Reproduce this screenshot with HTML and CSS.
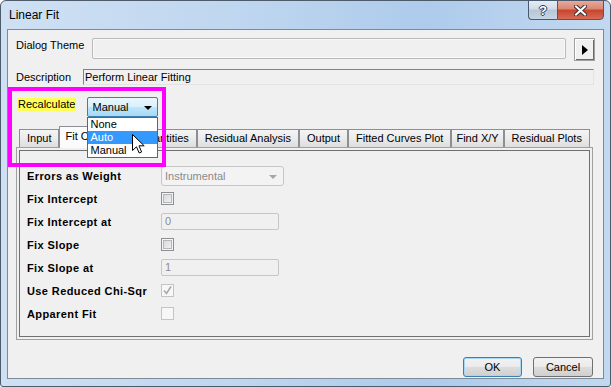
FILE: index.html
```html
<!DOCTYPE html>
<html lang="en">
<head>
  <meta charset="UTF-8" />
  <title>Linear Fit</title>
  <link rel="stylesheet" href="styles.css">
</head>
<body>
  <div class="window">
    <div class="titlebar">
      <span class="title">Linear Fit</span>
      <div class="caption-btns">
        <div class="cap help"><span>?</span></div>
        <div class="cap close">
          <svg width="13" height="11" viewBox="0 0 13 11">
            <path d="M2 1.5 L11 9.5 M11 1.5 L2 9.5" stroke="#3a3a3a" stroke-width="4.2" stroke-linecap="square" />
            <path d="M2 1.5 L11 9.5 M11 1.5 L2 9.5" stroke="#fff" stroke-width="2" stroke-linecap="square" />
          </svg>
        </div>
      </div>
    </div>

    <div class="client">
      <div class="theme-row">
        <span class="theme-label">Dialog Theme</span>
        <div class="theme-box"></div>
        <div class="theme-btn"></div>
      </div>

      <div class="desc-row">
        <span class="desc-label">Description</span>
        <div class="desc-box">Perform Linear Fitting</div>
      </div>

      <div class="recalc-row">
        <span class="recalc-label">Recalculate</span>
        <div class="recalc-combo">
          Manual
          <ul class="combo-list">
            <li>None</li>
            <li class="active">Auto</li>
            <li>Manual</li>
          </ul>
        </div>
      </div>

      <div class="tabs">
        <div class="tab">Input</div>
        <div class="tab selected">Fit Control</div>
        <div class="tab">Quantities</div>
        <div class="tab">Residual Analysis</div>
        <div class="tab">Output</div>
        <div class="tab">Fitted Curves Plot</div>
        <div class="tab narrow">Find X/Y</div>
        <div class="tab">Residual Plots</div>
      </div>

      <div class="tab-panel">
        <div class="group">
          <div class="form">
            <label>Errors as Weight</label>
            <div class="combo-disabled">Instrumental</div>

            <label>Fix Intercept</label>
            <div class="check"></div>

            <label>Fix Intercept at</label>
            <div class="text-disabled">0</div>

            <label>Fix Slope</label>
            <div class="check"></div>

            <label>Fix Slope at</label>
            <div class="text-disabled">1</div>

            <label>Use Reduced Chi-Sqr</label>
            <div class="check disabled">
              <svg width="11" height="11" viewBox="0 0 11 11">
                <path d="M2 5.5 L4.5 8.5 L9 1.5" fill="none" stroke="#a8a8a8" stroke-width="1.6" />
              </svg>
            </div>

            <label>Apparent Fit</label>
            <div class="check disabled"></div>
          </div>
        </div>
      </div>

      <div class="actions">
        <button class="btn default">OK</button>
        <button class="btn">Cancel</button>
      </div>

      <div class="highlight-box"></div>

      <svg class="cursor" width="14" height="21" viewBox="0 0 14 21">
        <path d="M0.5 0.5 L0.5 16.5 L4.5 12.8 L7.2 19 L9.6 18 L7 11.8 L12.2 11.8 Z" fill="#fff" stroke="#000" stroke-width="1" stroke-linejoin="round" />
      </svg>
    </div>
  </div>
</body>
</html>
```

FILE: styles.css
```css
body {
  margin: 0;
  background: #fff;
  font-family: "Liberation Sans", Arial, sans-serif;
  font-size: 11px;
  color: #000;
}

.window {
  width: 611px;
  height: 387px;
  box-sizing: border-box;
  border: 1px solid #4d5b6a;
  border-radius: 6px 6px 3px 3px;
  background: linear-gradient(to right, #cfe0f3, #bed6ef 40%, #aecbec 70%, #c2d8f0);
  display: flex;
  flex-direction: column;
}

/* title bar */
.titlebar {
  height: 28px;
  display: flex;
  align-items: flex-start;
  padding: 0 6px 0 8px;
}

.title {
  font-size: 12px;
  line-height: 28px;
}

.caption-btns {
  margin-left: auto;
  margin-top: -1px;
  display: flex;
}

.cap {
  height: 20px;
  box-sizing: border-box;
  border: 1px solid #4a5a6e;
  display: flex;
  align-items: center;
  justify-content: center;
}

.help {
  width: 29px;
  border-right: none;
  border-radius: 0 0 0 4px;
  background: linear-gradient(#e4ecf5, #d2dce8 45%, #b7c6d7 50%, #c7d4e3);
}

.help span {
  font-weight: bold;
  font-size: 13px;
  color: #fff;
  text-shadow: 1px 0 #3a3a3a, -1px 0 #3a3a3a, 0 1px #3a3a3a, 0 -1px #3a3a3a;
}

.close {
  width: 47px;
  border-radius: 0 0 4px 0;
  background: linear-gradient(#eaa99a, #d98672 45%, #c7432d 50%, #d76b53);
}

/* client area */
.client {
  flex: 1;
  margin: 0 6px 7px;
  background: #f0f0f0;
  border: 1px solid #7d8a98;
  position: relative;
}

.theme-row {
  display: flex;
  align-items: flex-start;
  margin: 8px 0 0 8px;
}

.theme-label {
  width: 76px;
  line-height: 15px;
}

.theme-box {
  width: 474px;
  height: 21px;
  box-sizing: border-box;
  border: 1px solid #bababa;
  border-radius: 2px;
  box-shadow: inset 0 0 0 1px #f8f8f8;
}

.theme-btn {
  width: 21px;
  height: 23px;
  box-sizing: border-box;
  margin-left: 8px;
  border: 1px solid #a0a0a0;
  box-shadow: inset 1px 1px #fff, inset -1px -1px #696969;
  display: flex;
  align-items: center;
  justify-content: center;
}

.theme-btn::after {
  content: "";
  border-left: 6px solid #000;
  border-top: 5px solid transparent;
  border-bottom: 5px solid transparent;
}

.desc-row {
  display: flex;
  margin: 8px 0 0 8px;
}

.desc-label {
  width: 67px;
  line-height: 16px;
}

.desc-box {
  width: 511px;
  height: 16px;
  box-sizing: border-box;
  border: 1px solid #e3e3e3;
  border-top-color: #828282;
  border-left-color: #828282;
  padding-left: 1px;
  line-height: 14px;
}

.recalc-row {
  display: flex;
  align-items: flex-start;
  margin: 12px 0 0 9px;
}

.recalc-label {
  background: #ffff55;
  line-height: 13px;
  padding: 0 1px;
  margin: 1px 11px 0 0;
}

.recalc-combo {
  position: relative;
  width: 71px;
  height: 20px;
  box-sizing: border-box;
  border: 1px solid #3c7fb1;
  border-radius: 2px;
  background: linear-gradient(#eaf6fd, #d9f0fc 50%, #bee6fd 50%, #a7d9f5);
  padding-left: 4px;
  line-height: 18px;
  z-index: 3;
}

.recalc-combo::after {
  content: "";
  position: absolute;
  right: 5px;
  top: 8px;
  border-left: 4px solid transparent;
  border-right: 4px solid transparent;
  border-top: 4px solid #000;
}

.combo-list {
  position: absolute;
  top: 19px;
  left: -1px;
  width: 71px;
  box-sizing: border-box;
  margin: 0;
  padding: 0;
  list-style: none;
  background: #fff;
  border: 1px solid #646464;
}

.combo-list li {
  line-height: 13px;
  padding-left: 2px;
}

.combo-list li.active {
  background: #3399ff;
  color: #fff;
}

/* tabs */
.tabs {
  display: flex;
  align-items: flex-end;
  height: 21px;
  margin: 9px 0 0 11px;
  position: relative;
  z-index: 1;
}

.tab {
  height: 18px;
  box-sizing: border-box;
  border: 1px solid #8c8e94;
  border-bottom: none;
  padding: 0 7px;
  line-height: 17px;
  background: linear-gradient(#f4f4f4, #ebebeb 50%, #dedede);
}

.tab.narrow {
  padding: 0 4px;
}

.tab.selected {
  height: 22px;
  margin-bottom: -1px;
  padding: 0 14px 0 5px;
  line-height: 19px;
  background: #fbfbfb;
}

.tab-panel {
  margin-left: 8px;
  width: 577px;
  height: 193px;
  box-sizing: border-box;
  border: 1px solid #a0a0a0;
  padding: 2px;
}

.group {
  height: 100%;
  box-sizing: border-box;
  border: 1px solid #6f6f6f;
  padding: 13px 0 0 7px;
}

.form {
  display: grid;
  grid-template-columns: 134px auto;
  grid-auto-rows: 23px;
  align-items: center;
  justify-items: start;
}

.form label {
  font-weight: bold;
  letter-spacing: 0.4px;
}

.combo-disabled {
  position: relative;
  width: 123px;
  height: 20px;
  box-sizing: border-box;
  border: 1px solid #c6c6c6;
  border-radius: 3px;
  background: #f3f3f3;
  color: #8a8a8a;
  padding-left: 3px;
  line-height: 18px;
}

.combo-disabled::after {
  content: "";
  position: absolute;
  right: 6px;
  top: 8px;
  border-left: 4px solid transparent;
  border-right: 4px solid transparent;
  border-top: 4px solid #a6a6a6;
}

.text-disabled {
  width: 118px;
  height: 17px;
  box-sizing: border-box;
  border: 1px solid #c6c6c6;
  border-radius: 2px;
  background: #f0f0f0;
  color: #8d8d8d;
  padding-left: 3px;
  line-height: 15px;
}

.check {
  width: 13px;
  height: 13px;
  box-sizing: border-box;
  border: 1px solid #8e8f8f;
  background: linear-gradient(135deg, #d4d4d4, #f6f6f6);
  box-shadow: inset 0 0 0 1px #f4f4f4, inset 0 0 0 2px #b3b6ba;
}

.check.disabled {
  border-color: #c4c4c4;
  background: #f7f7f7;
  box-shadow: none;
}

.check svg {
  display: block;
}

/* dialog buttons */
.actions {
  display: flex;
  justify-content: flex-end;
  gap: 11px;
  margin-top: 17px;
  padding-right: 10px;
}

.btn {
  width: 60px;
  height: 20px;
  box-sizing: border-box;
  padding: 0;
  border: 1px solid #707070;
  border-radius: 3px;
  background: linear-gradient(#f2f2f2, #ebebeb 50%, #dddddd 50%, #cfcfcf);
  font-family: "Liberation Sans", Arial, sans-serif;
  font-size: 11px;
  color: #000;
}

.btn.default {
  width: 59px;
  border-color: #3c7fb1;
  box-shadow: inset 0 0 0 1px #a9d6f3;
}

/* overlays */
.highlight-box {
  position: absolute;
  left: 0;
  top: 57px;
  width: 158px;
  height: 80px;
  box-sizing: border-box;
  border: 4px solid #ff00ff;
  z-index: 2;
}

.cursor {
  position: absolute;
  left: 124px;
  top: 104px;
  z-index: 4;
}
```
